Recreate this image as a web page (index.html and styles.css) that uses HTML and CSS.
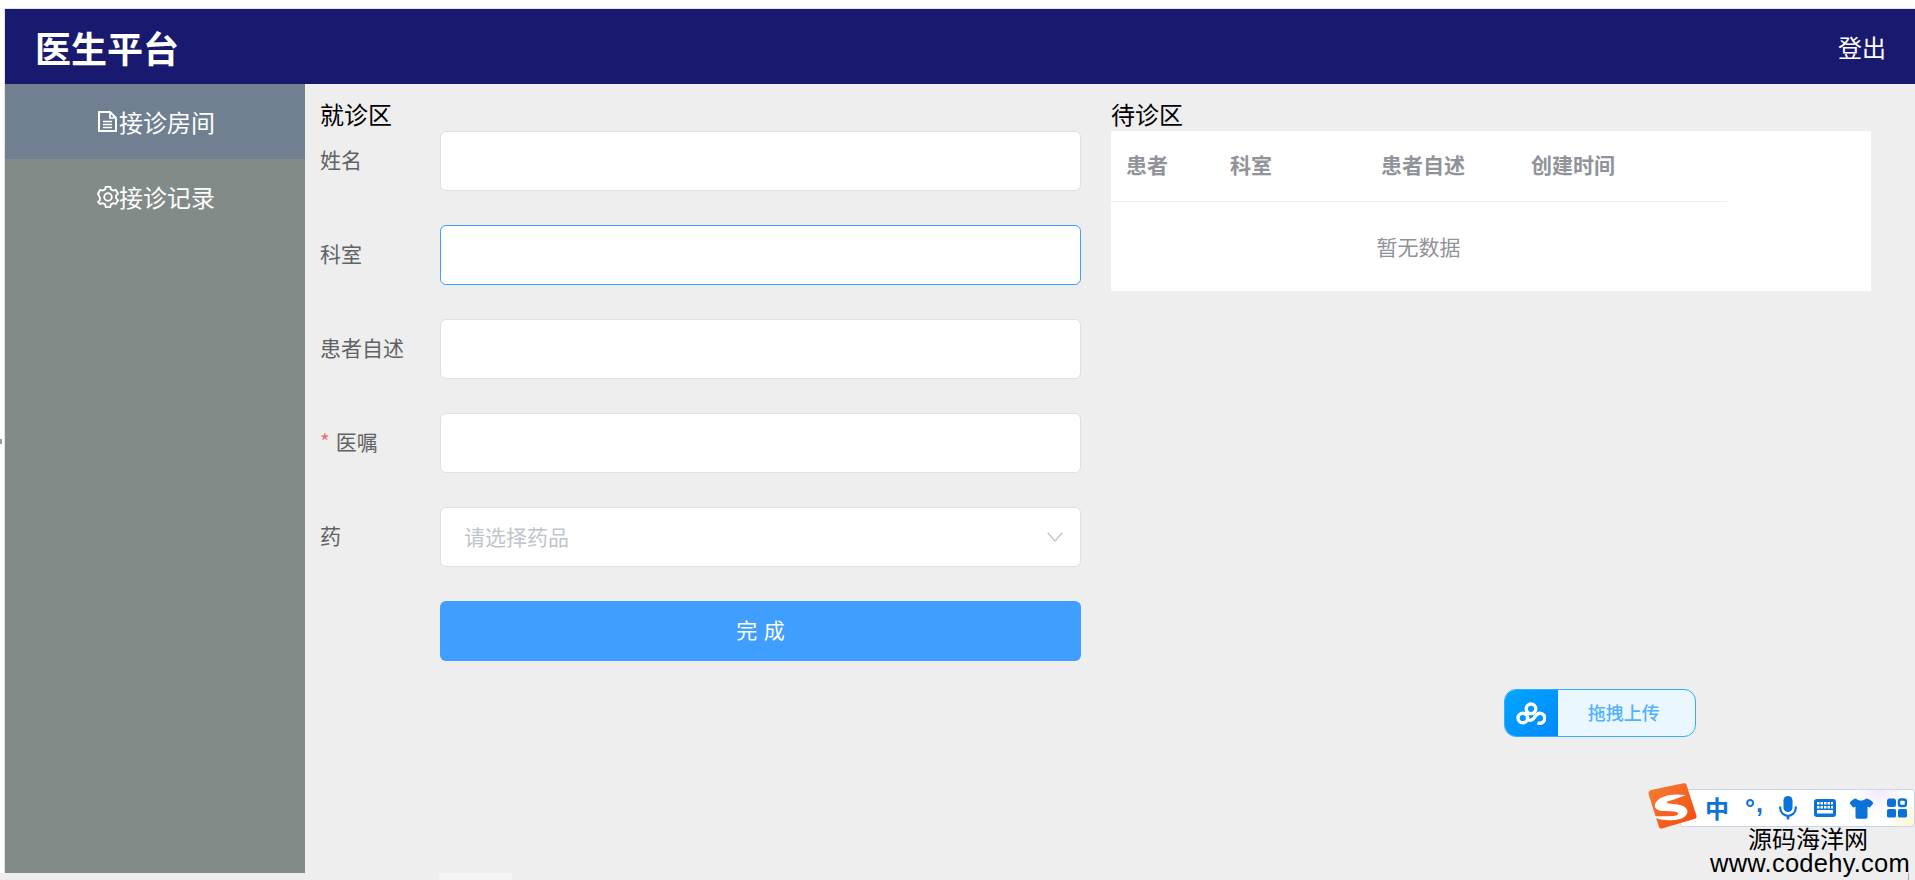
FILE: index.html
```html
<!DOCTYPE html>
<html lang="zh-CN">
<head>
<meta charset="utf-8">
<title>医生平台</title>
<link rel="stylesheet" href="styles.css">
</head>
<body>
<div class="window">
  <div class="shell">
    <header class="topbar">
      <h1 class="brand">医生平台</h1>
      <a class="logout">登出</a>
    </header>
    <div class="body-row">
      <nav class="sidebar">
        <a class="menu-item is-active">
          <svg class="menu-icon" viewBox="0 0 19 21" fill="none" stroke="#fff" stroke-width="2"><path d="M1 1h11l6 6v13H1z"/><path d="M12 1v6h6M5 10.500h9M5 13.500h9M5 16.500h9" stroke-width="1.700"/></svg>
          <span>接诊房间</span>
        </a>
        <a class="menu-item">
          <svg class="menu-icon gear" viewBox="0 0 22 22" fill="none" stroke="#fff" stroke-width="1.900"><path d="M8.800 1.200h4.400l.7 2.600 2.300 1.300 2.600-.7 2.200 3.800-1.900 1.900v2.600l1.900 1.900-2.200 3.800-2.600-.7-2.300 1.300-.7 2.600H8.800l-.7-2.600-2.300-1.300-2.600.7L1 16.600l1.900-1.900v-2.600L1 8.200l2.200-3.800 2.600.7 2.300-1.300z" transform="translate(0 -.5)"/><circle cx="11" cy="11" r="3.800"/></svg>
          <span>接诊记录</span>
        </a>
      </nav>
      <main class="content">
        <section class="col">
          <h2 class="col-title">就诊区</h2>
          <form class="form">
            <div class="form-item"><label class="form-label">姓名</label><input class="field" type="text"></div>
            <div class="form-item"><label class="form-label">科室</label><input class="field is-focus" type="text"></div>
            <div class="form-item"><label class="form-label">患者自述</label><input class="field" type="text"></div>
            <div class="form-item"><label class="form-label"><span class="req">*</span>医嘱</label><input class="field" type="text"></div>
            <div class="form-item"><label class="form-label">药</label>
              <div class="field select"><span class="placeholder">请选择药品</span>
                <svg class="chevron" viewBox="0 0 16 10" fill="none" stroke="#c0c4cc" stroke-width="1.300"><path d="M.7.7 8 9l7.300-8.300"/></svg>
              </div>
            </div>
            <div class="form-item"><span class="form-label"></span><button class="submit" type="button">完 成</button></div>
          </form>
        </section>
        <section class="col">
          <h2 class="col-title">待诊区</h2>
          <div class="table-card">
            <div class="table">
              <div class="thead">
                <div class="th c1">患者</div>
                <div class="th c2">科室</div>
                <div class="th c3">患者自述</div>
                <div class="th c4">创建时间</div>
              </div>
              <div class="empty">暂无数据</div>
            </div>
          </div>
        </section>
      </main>
    </div>
  </div>
</div>
<div class="bottom-strip"><span class="bottom-tab"></span></div>

<span class="edge-mark"></span>

<div class="upload-widget">
  <span class="upload-logo">
    <svg viewBox="0 0 30 23" width="30" height="23" fill="none" stroke="#fff" stroke-width="3.400"><circle cx="15" cy="6.800" r="4.800"/><circle cx="6.800" cy="16" r="4.800"/><path d="M11.500 17.500c2.500 1.500 5 .5 6.500-1.500 1.500-2.200 3-5 6-4.700a5 5 0 1 1-2.500 9.400"/></svg>
  </span>
  <span class="upload-text">拖拽上传</span>
</div>

<div class="ime-bar">
  <span class="ime-key ime-zh">中</span>
  <span class="ime-key ime-punct"><span class="ime-ring">°</span>,</span>
  <svg class="ime-icon ime-mic" viewBox="0 0 18 24" width="18" height="24" fill="#0a72d8"><rect x="4.500" y="0" width="9" height="16" rx="4.500"/><path d="M1.200 10.500v1.500a7.800 7.800 0 0 0 15.600 0v-1.500" fill="none" stroke="#0a72d8" stroke-width="2.200"/><rect x="7.700" y="19" width="2.600" height="4.500"/></svg>
  <svg class="ime-icon ime-kbd" viewBox="0 0 22 18" width="22" height="18"><rect x="0" y="0" width="22" height="18" rx="3" fill="#0a72d8"/><path d="M3 3h2.500v2.500H3zM6.500 3H9v2.500H6.500zM10 3h2.500v2.500H10zM13.500 3H16v2.500h-2.500zM17 3h2v2.500h-2zM3 7h2.500v2.500H3zM6.500 7H9v2.500H6.500zM10 7h2.500v2.500H10zM13.500 7H16v2.500h-2.500zM17 7h2v2.500h-2zM3 11h16v3.500H3z" fill="#fff"/></svg>
  <svg class="ime-icon ime-shirt" viewBox="0 0 24 21" width="24" height="21" fill="#0a72d8"><path d="M7 0.500c1.500 1.500 3 2 5 2s3.500-.5 5-2c3 .5 5.500 2 7 4 .3.500.2 1-.2 1.500l-2.500 3c-.4.500-1 .5-1.500.2l-1.300-.7V19c0 1-.7 1.700-1.700 1.700H8.200c-1 0-1.700-.7-1.700-1.700V8.500l-1.300.7c-.5.300-1.100.3-1.500-.2L1.200 6C.8 5.500.7 5 1 4.500c1.500-2 3-3.500 6-4z"/></svg>
  <svg class="ime-icon ime-grid" viewBox="0 0 20 20" width="20" height="20" fill="#0a72d8"><rect x="0" y="0.500" width="9" height="8.500" rx="2.500"/><rect x="12" y="1.500" width="7" height="6.500" rx="2" fill="none" stroke="#0a72d8" stroke-width="2.500"/><rect x="0" y="11" width="9" height="8.500" rx="1.500"/><rect x="11" y="11" width="9" height="8.500" rx="1.500"/></svg>
</div>
<div class="ime-logo">
  <svg viewBox="0 0 49 46" width="49" height="46"><defs><linearGradient id="imeg" x1="0" y1="0" x2="1" y2="1"><stop offset="0" stop-color="#f57f35"/><stop offset="1" stop-color="#f6480f"/></linearGradient></defs><path d="M3 7 35.500.3c1.500-.3 2.500.3 3 1.500l10 31c.4 1.500-.3 2.500-1.500 3L14 45.600c-1.500.3-2.500-.3-3-1.500L.5 11c-.4-1.500 1-3.500 2.500-4z" fill="url(#imeg)"/><path d="M38 12C30 11 20 11 15 14 7 17 4 24 10 27c6 2.500 16 0 20 3 1 2-2 3-6 3-7 .5-13 0-19 .5 7 4.500 20 4.500 27 2.500 8-2.500 10-9 4-12.500-5-3-12-2-17-3.500-1-1.500 3-2.500 7-3.500z" fill="#fff"/></svg>
</div>
<div class="watermark">
  <div class="wm-cn">源码海洋网</div>
  <div class="wm-url">www.codehy.com</div>
</div>
<span class="corner-tick"></span>
</body>
</html>
```

FILE: styles.css
```css
* { box-sizing: border-box; }
html, body { margin: 0; padding: 0; height: 880px; overflow: hidden; }
body {
  background: #eee;
  font-family: "Noto Sans CJK SC", "Liberation Sans", sans-serif;
  position: relative;
}
.window {
  height: 873px;
  background: #fff;
  padding: 8px 0 0 4px;
}
.shell {
  height: 865px;
  display: flex;
  flex-direction: column;
  border-top: 1px solid #e4e4e4;
  border-left: 1px solid #e4e4e4;
  background: #eee;
}
.bottom-strip { height: 7px; padding-left: 439px; }
.bottom-tab { display: block; width: 73px; height: 7px; background: #f5f5f5; }

.topbar {
  height: 75px;
  flex: none;
  background: #191970;
  color: #fff;
  display: flex;
  align-items: center;
  justify-content: space-between;
  padding: 0 29px 0 30px;
}
.brand { margin: 0; font-size: 36px; font-weight: 700; line-height: 1; }
.logout { font-size: 24px; line-height: 1; }

.body-row { flex: 1; display: flex; min-height: 0; }
.sidebar { width: 300px; flex: none; background: #828b88; }
.menu-item {
  height: 75px;
  display: flex;
  align-items: center;
  justify-content: center;
  gap: 2px;
  padding-left: 3px;
  color: #fff;
  font-size: 24px;
  line-height: 1;
}
.menu-item.is-active { background: #708090; }
.menu-icon { width: 19px; height: 21px; flex: none; }
.menu-icon.gear { width: 22px; height: 22px; margin: 0 -1.500px; }

.content { flex: 1; display: flex; gap: 30px; padding-left: 15px; }
.col { width: 761px; flex: none; }
.col-title {
  margin: 0;
  padding-top: 14px;
  height: 47px;
  font-size: 24px;
  font-weight: 400;
  line-height: 31px;
  color: #000;
}
.form-item { display: flex; align-items: center; height: 60px; margin-bottom: 34px; }
.form-label { width: 120px; flex: none; font-size: 21px; color: #606266; line-height: 1; margin-bottom: 4px; }
.req { color: #f56c6c; margin-right: 6px; font-size: 21px; }
.field {
  flex: 1;
  height: 60px;
  min-width: 0;
  background: #fff;
  border: 1.500px solid #dcdfe6;
  border-radius: 6px;
  outline: none;
  font: inherit;
}
.field.is-focus { border-color: #409eff; }
.select { display: flex; align-items: center; justify-content: space-between; padding: 0 17px 0 23px; }
.placeholder { font-size: 21px; color: #c0c4cc; line-height: 1; margin-bottom: 2px; }
.chevron { width: 16px; height: 10px; }
.submit {
  flex: 1;
  height: 60px;
  padding: 0 0 4px;
  background: #409eff;
  color: #fff;
  border: 0;
  border-radius: 6px;
  font: inherit;
  font-size: 21px;
  word-spacing: 2px;
}

.table-card { background: #fff; width: 760px; height: 160px; }
.table { width: 615px; }
.thead { display: flex; height: 71px; padding-bottom: 3px; border-bottom: 1.500px solid #ebeef5; align-items: center; }
.th { padding-left: 15px; font-size: 21px; font-weight: 700; color: #909399; line-height: 1; }
.c1 { width: 104px; }
.c2 { width: 151px; }
.c3 { width: 150px; }
.c4 { width: 210px; }
.empty { height: 89px; padding-bottom: 1px; display: flex; align-items: center; justify-content: center; font-size: 21px; color: #909399; }

.edge-mark { position: absolute; left: 0; top: 439px; width: 2px; height: 5px; background: #999; }

.upload-widget {
  position: absolute;
  left: 1504px;
  top: 689px;
  width: 192px;
  height: 48px;
  display: flex;
  border-radius: 12px;
  overflow: hidden;
  border: 1.500px solid #2fb0ff;
  background: #ebf7ff;
}
.upload-logo {
  width: 54px;
  margin: -1.500px 0 -1.500px -1.500px;
  background: linear-gradient(135deg, #00a6ff, #0088ff);
  display: flex;
  align-items: center;
  justify-content: center;
}
.upload-text { flex: 1; padding-right: 5px; text-align: center; font-size: 18px; line-height: 45px; color: #4fb2fa; font-weight: 500; }

.ime-bar {
  position: absolute;
  left: 1680px;
  top: 789px;
  width: 235px;
  height: 38px;
  padding-left: 24px;
  background:
    radial-gradient(circle at 100% 100%, #fdf3c9 0, rgba(253,243,201,0) 26px),
    radial-gradient(circle at 85% 0, #f4e6fb 0, rgba(244,230,251,0) 24px),
    #fff;
  border: 1.500px solid #c9d5e8;
  border-radius: 3px;
  display: flex;
  align-items: center;
  color: #0a72d8;
}
.ime-key { line-height: 1; font-weight: 700; flex: none; }
.ime-zh { font-size: 24px; width: 40px; }
.ime-punct { font-family: "Liberation Sans", sans-serif; font-size: 25px; width: 34px; margin-top: -9px; letter-spacing: 1px; }
.ime-ring { display: inline-block; transform: translateY(5px); }
.ime-icon { flex: none; }
.ime-mic { margin-right: 17px; }
.ime-kbd { margin-right: 13px; }
.ime-shirt { margin-right: 14px; }
.ime-logo { position: absolute; left: 1648px; top: 783px; width: 49px; height: 46px; }
.watermark { position: absolute; left: 1708px; top: 825px; width: 207px; color: #000; }
.wm-cn { font-size: 24px; line-height: 26px; padding-left: 40px; white-space: nowrap; }
.wm-url { font-family: "Liberation Sans", sans-serif; font-size: 25.500px; line-height: 24px; letter-spacing: .25px; padding-left: 2px; white-space: nowrap; }
.corner-tick { position: absolute; left: 1908px; top: 873px; width: 1px; height: 7px; background: #aaa; }
```
